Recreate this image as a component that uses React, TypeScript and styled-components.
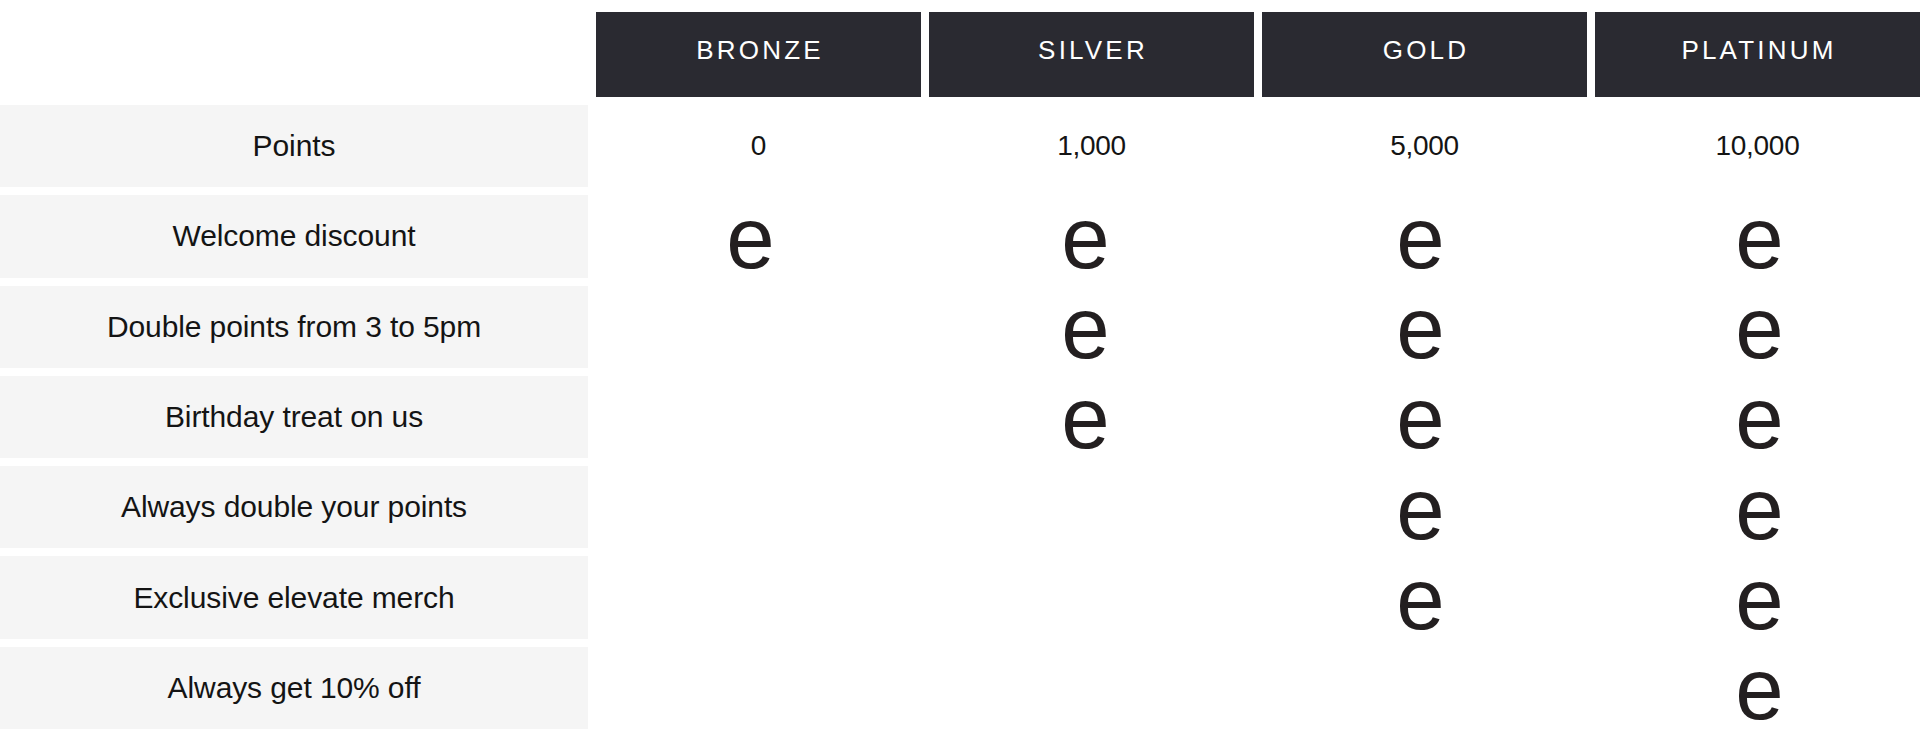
import React from "react";
import styled, { createGlobalStyle } from "styled-components";

const GlobalStyle = createGlobalStyle`
  html, body {
    margin: 0;
    padding: 0;
    background: #ffffff;
  }
  body {
    font-family: "Liberation Sans", Arial, sans-serif;
    color: #141414;
  }
`;

const Table = styled.div`
  display: grid;
  grid-template-columns: 588px repeat(4, 325px);
  grid-template-rows: 85px repeat(7, 82.29px);
  column-gap: 8px;
  row-gap: 8px;
  padding-top: 12px;
  width: 1920px;
`;

const Corner = styled.div``;

const TierHeader = styled.div`
  display: flex;
  align-items: center;
  justify-content: center;
  padding-bottom: 9px;
  padding-left: 3px;
  box-sizing: border-box;
  background: #2a2a31;
  color: #ffffff;
  font-size: 26px;
  letter-spacing: 3.2px;
  text-transform: uppercase;
`;

const Label = styled.div`
  display: flex;
  align-items: center;
  justify-content: center;
  background: #f5f5f5;
  color: #141414;
  font-size: 30px;
  letter-spacing: -0.1px;
`;

const Cell = styled.div`
  display: flex;
  align-items: center;
  justify-content: center;
  color: #141414;
`;

const PointsValue = styled.span`
  font-size: 28px;
  letter-spacing: -0.3px;
`;

const Mark = styled.span<{ $nudge: number }>`
  font-size: 87px;
  line-height: 60px;
  padding-top: 3px;
  color: #231f20;
  transform: translateX(${(p) => p.$nudge}px);
`;

const tiers = [
  { name: "Bronze", points: "0", nudge: -8 },
  { name: "Silver", points: "1,000", nudge: -6 },
  { name: "Gold", points: "5,000", nudge: -4 },
  { name: "Platinum", points: "10,000", nudge: 2 },
];

const benefits = [
  { label: "Welcome discount", from: 0 },
  { label: "Double points from 3 to 5pm", from: 1 },
  { label: "Birthday treat on us", from: 1 },
  { label: "Always double your points", from: 2 },
  { label: "Exclusive elevate merch", from: 2 },
  { label: "Always get 10% off", from: 3 },
];

export default function App() {
  return (
    <>
      <GlobalStyle />
      <Table>
        <Corner />
        {tiers.map((t) => (
          <TierHeader key={t.name}>{t.name}</TierHeader>
        ))}

        <Label>Points</Label>
        {tiers.map((t) => (
          <Cell key={t.name}>
            <PointsValue>{t.points}</PointsValue>
          </Cell>
        ))}

        {benefits.map((b) => (
          <React.Fragment key={b.label}>
            <Label>{b.label}</Label>
            {tiers.map((t, i) => (
              <Cell key={t.name}>
                {i >= b.from ? <Mark $nudge={t.nudge}>e</Mark> : null}
              </Cell>
            ))}
          </React.Fragment>
        ))}
      </Table>
    </>
  );
}
